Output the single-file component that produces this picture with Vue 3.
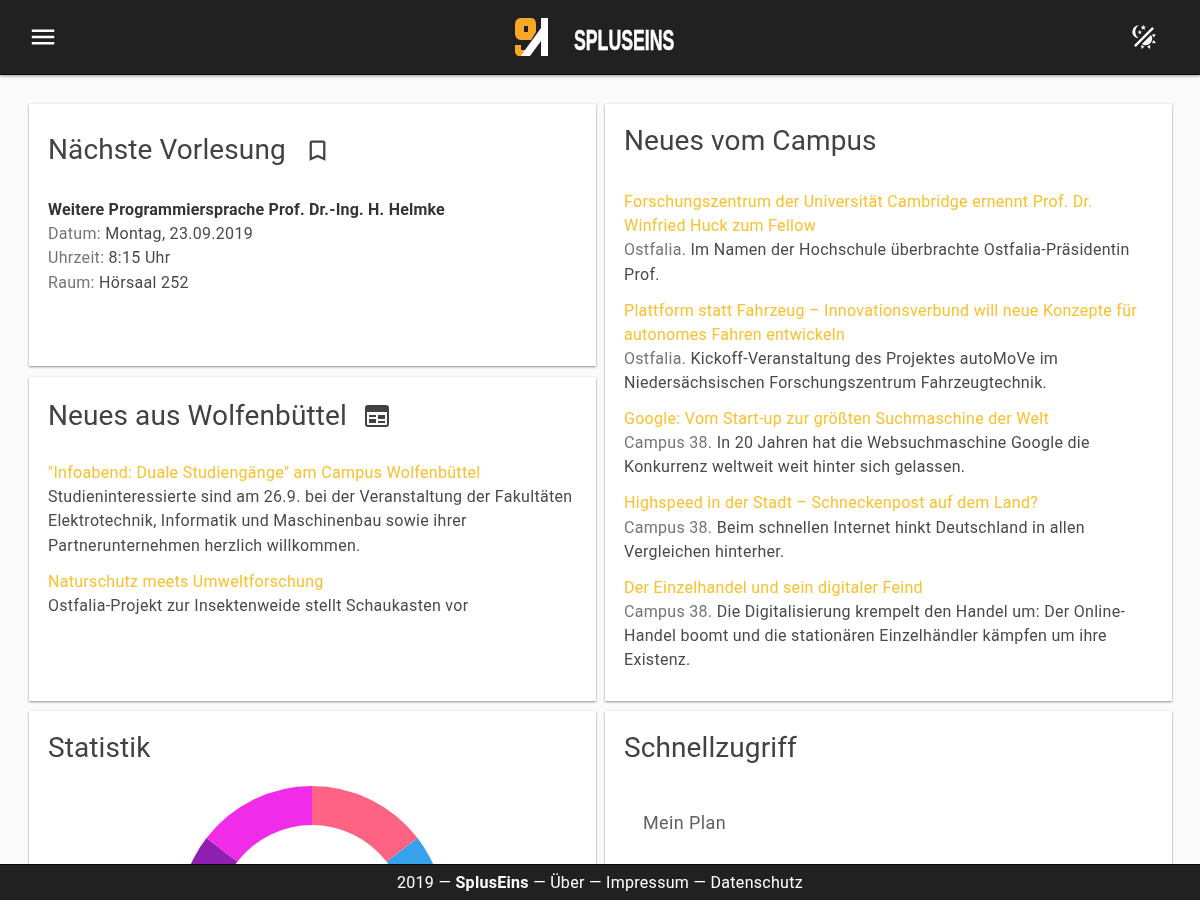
<template>
  <div class="page">
    <header class="topbar">
      <svg class="icon-menu" viewBox="0 0 24 24"><path d="M3,6H21V8H3V6M3,11H21V13H3V11M3,16H21V18H3V16Z" /></svg>
      <div class="brand">
        <svg class="brand-mark" viewBox="0 0 34 40">
          <path class="mark-s" fill-rule="evenodd" d="M7 1H17C21 1 22 4 22 8V15L17 23H7C3 23 1 20 1 16V8C1 4 3 1 7 1ZM10 9V15H14V9ZM1 28H7V33H12L8 39H5C3 39 1 37 1 35Z" />
          <path class="mark-one" d="M27 1H34V39H27V24L16 39H7L11 33L27 11Z" />
        </svg>
        <span class="brand-name">SPLUSEINS</span>
      </div>
      <svg class="icon-theme" viewBox="0 0 24 24"><path d="M7.5,2C5.71,3.15 4.5,5.18 4.5,7.5C4.5,9.82 5.71,11.85 7.53,13C4.46,13 2,10.54 2,7.5A5.5,5.5 0 0,1 7.5,2M19.07,3.5L20.5,4.93L4.93,20.5L3.5,19.07L19.07,3.5M12.89,5.93L11.41,5L9.97,6L10.39,4.3L9,3.24L10.75,3.12L11.33,1.47L12,3.1L13.73,3.13L12.38,4.26L12.89,5.93M9.59,9.54L8.43,8.81L7.31,9.59L7.65,8.27L6.56,7.44L7.92,7.35L8.37,6.06L8.88,7.33L10.24,7.36L9.19,8.23L9.59,9.54M19,13.5A5.5,5.5 0 0,1 13.5,19C12.28,19 11.15,18.6 10.24,17.93L17.93,10.24C18.6,11.15 19,12.28 19,13.5M14.6,20.08L17.37,18.93L17.13,22.28L14.6,20.08M18.93,17.38L20.08,14.6L22.28,17.14L18.93,17.38M20.08,12.42L18.94,9.64L22.28,9.88L20.08,12.42M9.63,18.93L12.41,20.08L9.87,22.27L9.63,18.93Z" /></svg>
    </header>

    <main class="content">
      <div class="stack">
        <section class="card card-lecture">
          <h2 class="title title-tall">
            Nächste Vorlesung
            <svg class="icon-bookmark" viewBox="0 0 24 24"><path d="M17,18L12,15.82L7,18V5H17M17,3H7A2,2 0 0,0 5,5V21L12,18L19,21V5C19,3.89 18.1,3 17,3Z" /></svg>
          </h2>
          <p class="lecture">
            <strong>Weitere Programmiersprache Prof. Dr.-Ing. H. Helmke</strong><br />
            <span class="muted">Datum:</span> Montag, 23.09.2019<br />
            <span class="muted">Uhrzeit:</span> 8:15 Uhr<br />
            <span class="muted">Raum:</span> Hörsaal 252
          </p>
        </section>

        <section class="card card-local">
          <h2 class="title">
            Neues aus Wolfenbüttel
            <svg class="icon-news" viewBox="0 0 24 22">
              <rect x="1" y="1" width="22" height="20" rx="2" class="news-frame" />
              <rect x="1" y="2" width="22" height="5" />
              <path d="M4 10H11V12H4ZM4 14H11V18H4ZM13 10H20V14H13ZM13 16H20V18H13Z" />
            </svg>
          </h2>
          <ul class="news news-local">
            <li v-for="item in localNews" :key="item.title">
              <a class="news-link">{{ item.title }}</a>
              <p>{{ item.text }}</p>
            </li>
          </ul>
        </section>
      </div>

      <section class="card card-campus">
        <h2 class="title">Neues vom Campus</h2>
        <ul class="news">
          <li v-for="item in campusNews" :key="item.title">
            <a class="news-link">{{ item.title }}</a>
            <p><span class="muted">{{ item.source }}</span> {{ item.text }}</p>
          </li>
        </ul>
      </section>

      <section class="card card-stats">
        <h2 class="title">Statistik</h2>
        <svg class="donut" viewBox="0 0 280 280">
          <path v-for="seg in segments" :key="seg.color" :d="seg.d" :fill="seg.color" />
        </svg>
      </section>

      <section class="card card-quick">
        <h2 class="title">Schnellzugriff</h2>
        <div class="quick-item">Mein Plan</div>
      </section>
    </main>

    <footer class="bottombar">
      2019 — <strong>SplusEins</strong> — Über — Impressum — Datenschutz
    </footer>
  </div>
</template>

<script setup>
const localNews = [
  {
    title: '"Infoabend: Duale Studiengänge" am Campus Wolfenbüttel',
    text: 'Studieninteressierte sind am 26.9. bei der Veranstaltung der Fakultäten Elektrotechnik, Informatik und Maschinenbau sowie ihrer Partnerunternehmen herzlich willkommen.'
  },
  {
    title: 'Naturschutz meets Umweltforschung',
    text: 'Ostfalia-Projekt zur Insektenweide stellt Schaukasten vor'
  }
]

const campusNews = [
  {
    title: 'Forschungszentrum der Universität Cambridge ernennt Prof. Dr. Winfried Huck zum Fellow',
    source: 'Ostfalia.',
    text: 'Im Namen der Hochschule überbrachte Ostfalia-Präsidentin Prof.'
  },
  {
    title: 'Plattform statt Fahrzeug – Innovationsverbund will neue Konzepte für autonomes Fahren entwickeln',
    source: 'Ostfalia.',
    text: 'Kickoff-Veranstaltung des Projektes autoMoVe im Niedersächsischen Forschungszentrum Fahrzeugtechnik.'
  },
  {
    title: 'Google: Vom Start-up zur größten Suchmaschine der Welt',
    source: 'Campus 38.',
    text: 'In 20 Jahren hat die Websuchmaschine Google die Konkurrenz weltweit weit hinter sich gelassen.'
  },
  {
    title: 'Highspeed in der Stadt – Schneckenpost auf dem Land?',
    source: 'Campus 38.',
    text: 'Beim schnellen Internet hinkt Deutschland in allen Vergleichen hinterher.'
  },
  {
    title: 'Der Einzelhandel und sein digitaler Feind',
    source: 'Campus 38.',
    text: 'Die Digitalisierung krempelt den Handel um: Der Online-Handel boomt und die stationären Einzelhändler kämpfen um ihre Existenz.'
  }
]

// ring slices in degrees, 0 is straight up
const slices = [
  { from: 0, to: 52.5, color: '#ff6384' },
  { from: 52.5, to: 130, color: '#36a2eb' },
  { from: 130, to: 230, color: '#ffce56' },
  { from: 230, to: 307.5, color: '#8e1fb0' },
  { from: 307.5, to: 360, color: '#f02ce8' }
]

const point = (r, deg) => {
  const a = (deg * Math.PI) / 180
  return `${(140 + r * Math.sin(a)).toFixed(2)} ${(140 - r * Math.cos(a)).toFixed(2)}`
}

const segments = slices.map(({ from, to, color }) => ({
  color,
  d: `M${point(133, from)}A133 133 0 0 1 ${point(133, to)}L${point(94, to)}A94 94 0 0 0 ${point(94, from)}Z`
}))
</script>

<style>
html,
body {
  margin: 0;
  background: #fafafa;
}
</style>

<style scoped>
.page {
  display: flex;
  flex-direction: column;
  height: 900px;
  overflow: hidden;
  background: #fafafa;
  font-family: Roboto, "Liberation Sans", sans-serif;
  letter-spacing: 0.3px;
  color: #4a4a4a;
  /* the reference is a soft, upscaled capture */
  filter: blur(0.6px);
}

.topbar {
  position: relative;
  z-index: 2;
  flex: none;
  display: flex;
  align-items: center;
  justify-content: space-between;
  box-sizing: border-box;
  height: 75px;
  padding: 0 42px 1px 28px;
  background: #212121;
  border-bottom: 1px solid #0a0a0a;
  box-shadow: 0 1px 3px rgba(0, 0, 0, 0.4);
}

.icon-menu {
  width: 30px;
  height: 30px;
  fill: #fff;
}

.brand {
  display: flex;
  align-items: center;
  gap: 26px;
  margin-left: 1px;
}

.brand-mark {
  width: 34px;
  height: 40px;
}

.mark-s {
  fill: #f9a825;
}

.mark-one {
  fill: #fff;
}

.brand-name {
  display: block;
  width: 101px;
  margin-top: 6px;
  font-family: "Liberation Sans", sans-serif;
  font-size: 30px;
  font-weight: 700;
  line-height: 30px;
  letter-spacing: 0;
  color: #fff;
  -webkit-text-stroke: 0.5px #fff;
  transform: scaleX(0.59);
  transform-origin: left center;
  white-space: nowrap;
}

.icon-theme {
  width: 28px;
  height: 28px;
  fill: #fff;
}

.content {
  flex: 1;
  min-height: 0;
  display: grid;
  grid-template-columns: 567px 567px;
  grid-template-rows: 597px 200px;
  gap: 10px 9px;
  padding: 29px 28px 0 29px;
  overflow: hidden;
}

.stack {
  display: flex;
  flex-direction: column;
  gap: 11px;
}

.card {
  box-sizing: border-box;
  padding: 19px 19px 0;
  background: #fff;
  box-shadow: 0 1px 2px rgba(0, 0, 0, 0.4), 0 0 3px rgba(0, 0, 0, 0.06);
}

.card-lecture {
  height: 262px;
}

.card-local {
  height: 324px;
  padding-top: 21px;
}

.title {
  display: flex;
  align-items: center;
  height: 36px;
  margin: 0;
  font-size: 28px;
  font-weight: 400;
  letter-spacing: 0.1px;
  line-height: 36px;
  color: #424242;
}

.title-tall {
  height: 54px;
}

.title svg {
  margin-left: 18px;
}

.icon-bookmark {
  width: 27px;
  height: 27px;
  fill: #424242;
}

.icon-news {
  width: 24px;
  height: 22px;
  fill: #424242;
}

.news-frame {
  fill: none;
  stroke: #424242;
  stroke-width: 2;
}

.lecture {
  margin: 21px 0 0;
  font-size: 16px;
  line-height: 24.2px;
}

.lecture strong {
  font-weight: 700;
  letter-spacing: 0.2px;
  color: #333;
}

.muted {
  color: #757575;
}

.news {
  margin: 31px 0 0;
  padding: 0;
  list-style: none;
  font-size: 16px;
  line-height: 24.2px;
}

.news-local {
  margin-top: 27px;
}

.news li + li {
  margin-top: 11.7px;
}

.news p {
  margin: 0;
}

.news-link {
  color: #fbc02d;
}

.donut {
  display: block;
  width: 280px;
  height: 280px;
  margin: 13px 0 0 124px;
}

.quick-item {
  margin: 45px 0 0 19px;
  font-size: 18px;
  line-height: 24px;
  letter-spacing: 0.4px;
  color: #616161;
}

.bottombar {
  position: relative;
  z-index: 2;
  flex: none;
  box-sizing: border-box;
  height: 36px;
  background: #212121;
  border-top: 1px solid #0a0a0a;
  font-size: 16px;
  line-height: 36px;
  color: #fff;
  text-align: center;
}

.bottombar strong {
  font-weight: 700;
}
</style>
